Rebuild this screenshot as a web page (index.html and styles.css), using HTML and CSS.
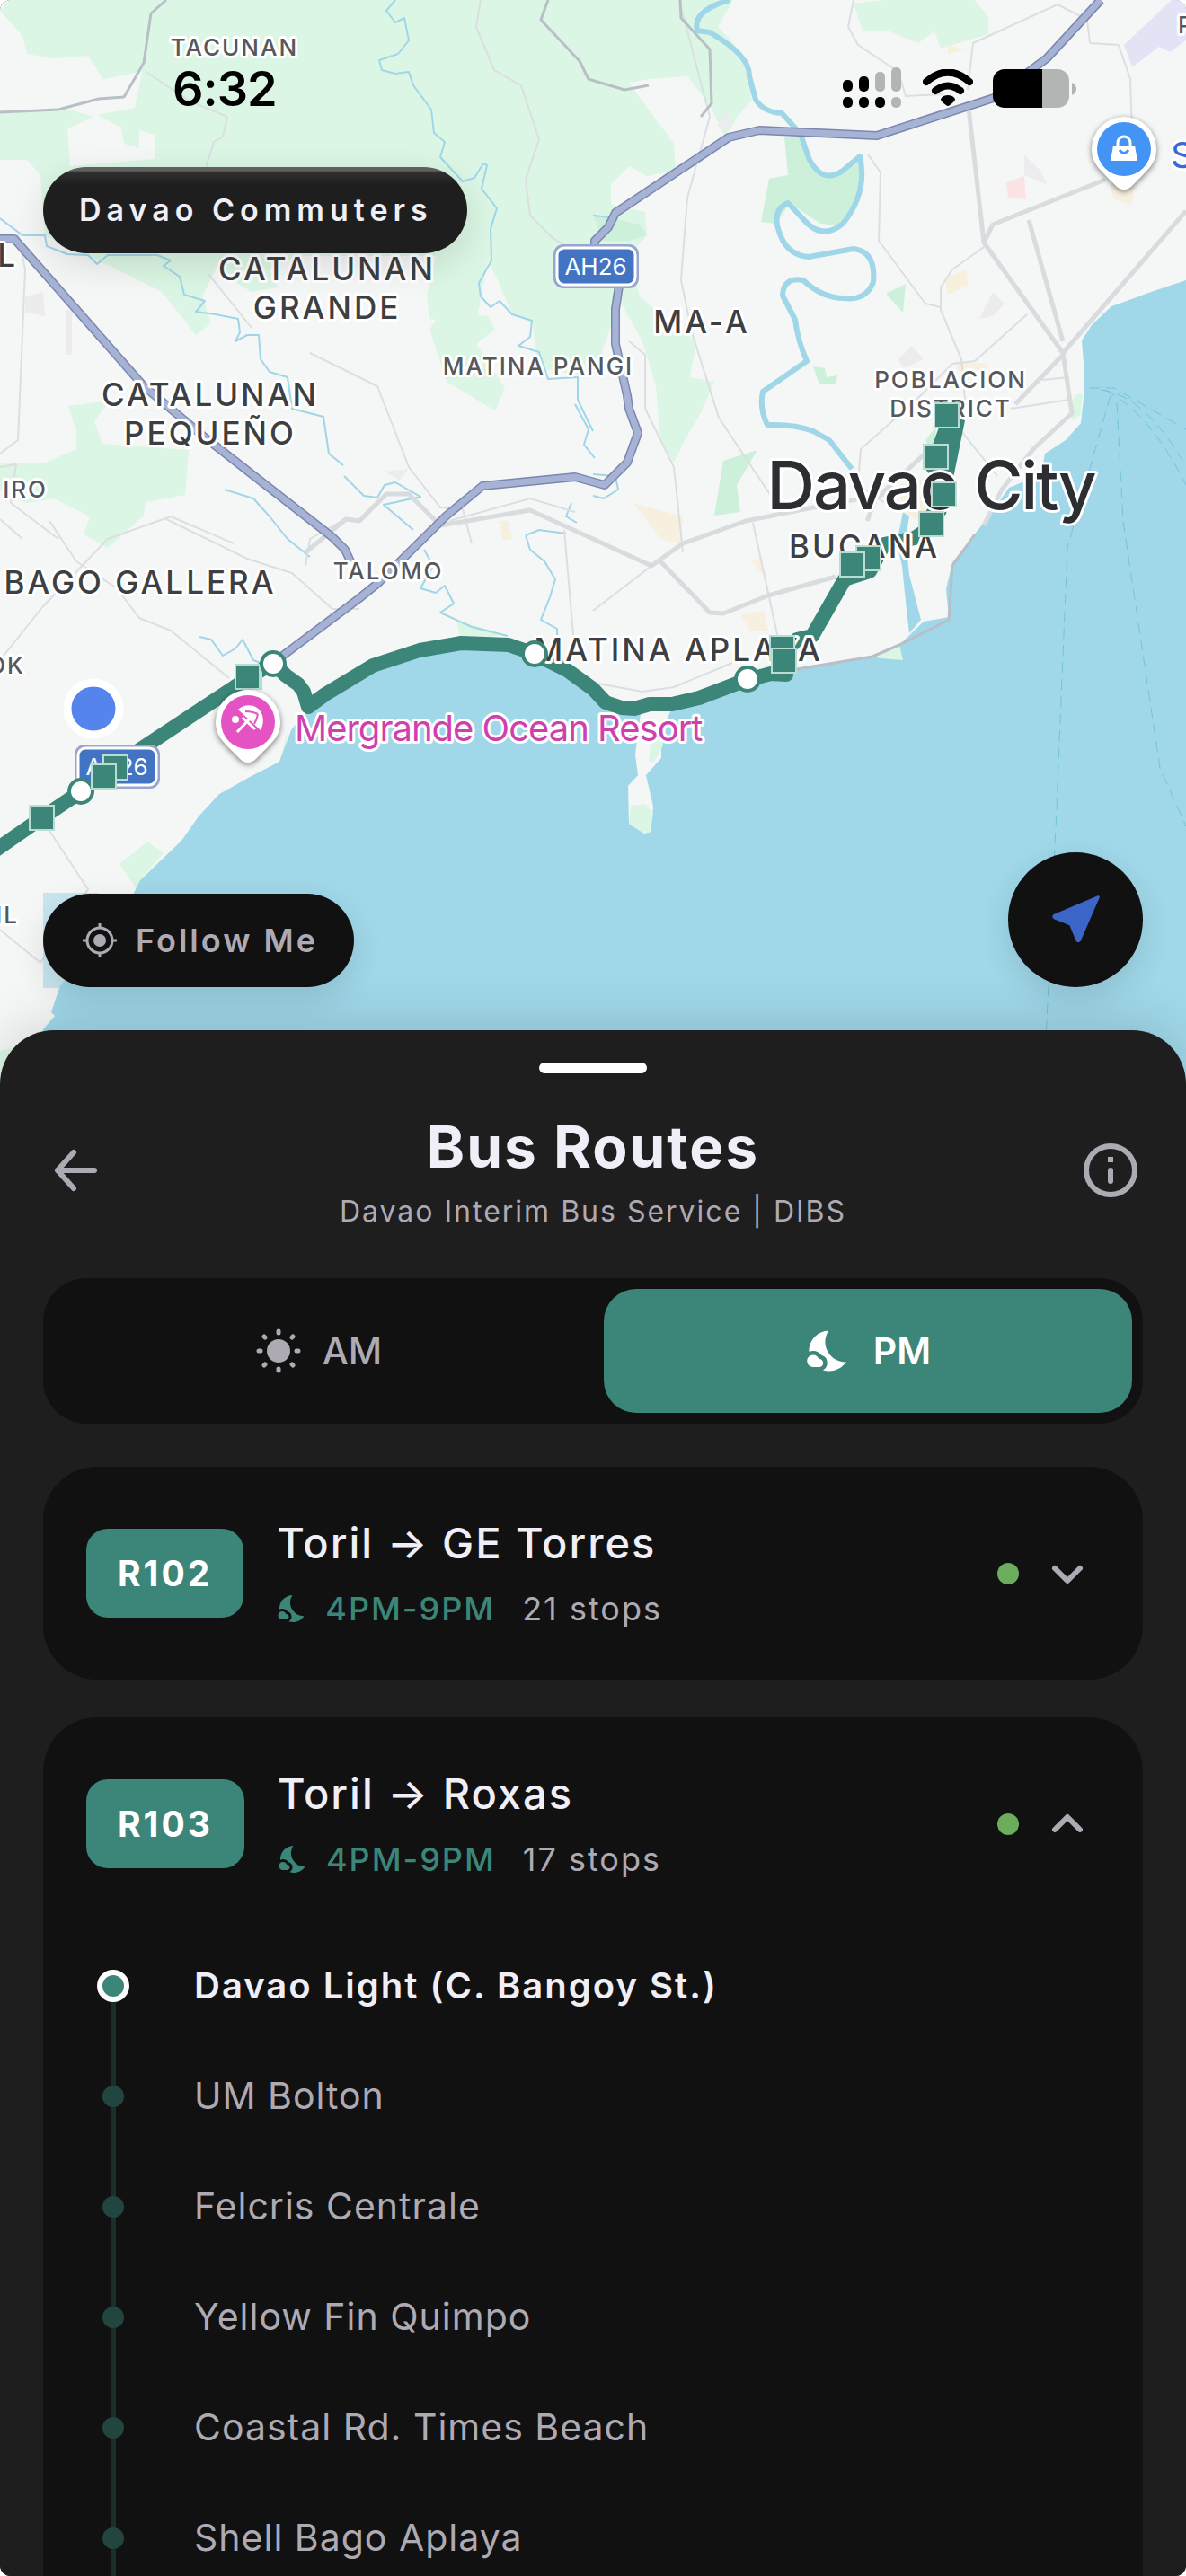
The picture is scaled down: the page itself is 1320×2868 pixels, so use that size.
FILE: index.html
```html
<!DOCTYPE html>
<html lang="en">

<head>
    <meta charset="utf-8">
    <meta name="viewport" content="width=device-width, initial-scale=1">
    <title>Davao Commuters</title>
    <link rel="stylesheet" href="styles.css">
</head>

<body>
    <div class="app">
        <div class="map">
            <svg class="map-canvas" viewBox="0 0 1320 1207" preserveAspectRatio="xMidYMin slice">
                <!-- parks and forest -->
                <g class="green">
                    <path d="M10 0H816L799 30L828 61L837 111L822 128L807 153L792 120L765 85L723 88L700 92L750 160L752 190L720 196L700 185L680 205L680 228L718 236L720 262L700 285L712 330L735 350L775 380L768 420L795 425L780 460L762 490L750 515L735 490L730 430L715 380L690 335L660 420L600 410L592 357L570 350L553 310L543 290L530 360L478 355L475 330L485 285H330L300 300L310 320L280 325L240 300L225 330L235 360L218 373L200 350L180 325L130 300L50 262L45 195L30 178H0V125L70 120L105 130L75 143L78 185L172 177V150L155 145V165L138 160L135 142L108 128L150 120L158 80L115 88L98 62L60 65L30 60L25 40L0 12Z" />
                    <path d="M490 348L543 352L551 367L530 383L562 432L551 457L497 425L478 367Z" />
                    <path d="M76 452L122 446L105 469L114 494L210 501L206 551L162 559L160 574L120 610L93 595L100 575L60 555L30 560L0 545V515L50 515L85 500L85 480Z" />
                    <path d="M950 4L985 0H1085L1100 19V38L1081 44L1047 54L1040 35L1022 48L988 34L960 34Z" />
                    <path d="M133 962L164 937L182 950L160 975L152 990Z M320 813L311 848L318 838ZM508 690L560 706L540 712L512 708Z" />
                    <path d="M0 1170L20 1165L10 1207H0Z" />
                </g>
                <g class="green-deep">
                    <path d="M873 153L891 153L900 176L913 195L934 195L957 178L959 199L950 230L934 251L913 249L879 226L864 249L847 247L856 199L877 195Z" />
                    <path d="M1008 316L1005 348L986 327ZM905 408L918 410L920 420L932 418L930 428L912 428ZM805 513L843 501L820 540L824 570L795 574ZM660 238L712 250L720 262L700 268L670 268ZM1030 490L1042 475L1040 510Z" />
                </g>
                <!-- built-up blocks -->
                <path class="sand" d="M1052 310L1075 300L1078 318L1055 328ZM1062 402L1100 405L1090 425L1072 422ZM1000 540L1040 530L1060 560L1030 585L1005 570ZM825 685L850 680L855 703L835 703ZM836 625L848 620L850 640ZM705 560L760 575L758 605L735 600ZM1235 205L1262 205L1260 228L1240 222ZM555 580L565 580L570 600L560 602ZM1055 50L1075 55L1055 60Z" />
                <path class="grey" d="M1140 172L1158 190L1165 205L1140 195ZM1090 355L1105 325L1118 338L1105 352ZM1000 400L1015 385L1028 400L1005 410ZM28 330L48 325L50 352L28 348ZM73 345H80V395H73ZM428 525L455 522L445 535ZM798 140L812 120L812 145Z" />
                <path class="rose" d="M1120 203L1140 196L1142 222L1122 220Z" />
                <path class="airport" d="M1251 50L1304 0H1320V45L1302 58L1290 52L1260 75Z" />

                <!-- gulf -->
                <path class="sea" d="M1320 312L1287 323L1237 341L1215 362L1204 379L1207 417V436L1203 471L1186 490L1163 505L1159 528L1123 543L1098 578L1060 626L1053 656L1056 687L1028 692L1001 718L971 731L887 745L850 758L778 783L748 788L736 815L736 844L719 863L727 898L724 926L717 928L700 917L699 875L710 863L707 840L713 794L692 788L660 767L631 746L595 728L566 718L513 716L467 724L415 741L343 787L324 813L311 848L278 865L244 884L221 909L202 936L156 980L149 994L100 1045L66 1100L57 1127L61 1131L48 1146L36 1207H1320Z" />
                <path class="green" d="M702 897L718 895L727 905L724 926L717 928L700 917ZM736 815L724 830L722 848L728 848L738 830ZM1192 468L1195 440L1205 438L1203 462ZM971 731L1001 718L1005 735L980 733Z" />

                <!-- rivers -->
                <g class="creek">
                    <path d="M440 0L430 12L440 25L450 20L455 45L443 60L422 67L425 78L440 82L455 80L460 95L480 122L483 148L495 158L490 175L515 202L528 198L538 182L542 184L536 210L553 232L546 255L547 290L533 315L535 330L546 342L556 335L570 350L592 357L590 375L577 385L600 392L610 422L643 420V445L655 470L660 480" />
                    <path d="M0 243L25 262L50 262L52 274L75 283L98 284L108 294L120 284H175L190 290L182 296L200 308L205 328L228 335L218 347L240 350L265 355L267 370L262 380L275 373L288 373L290 400L300 414L320 420L325 455L360 464L366 505L382 518M383 530L405 552L420 554L428 540L440 537L468 553L427 562L460 590" />
                    <path d="M472 612L482 630L468 655L485 660L495 652L505 672L490 682L525 698L565 708" />
                    <path d="M585 596L590 612L606 625L618 645L612 665L602 690L620 700V710M636 560L630 575L642 582M585 596L600 590L630 594" />
                    <path d="M222 709L235 712L248 730L262 722L270 712L282 735L300 742M250 545L282 555L300 575L320 600L345 620" />
                    <path d="M660 528L685 530L688 545L672 555L660 552M660 240L680 242M640 450L655 478L650 495L662 510" />
                </g>
                <path class="river" d="M812 0Q770 12 776 34L790 36Q835 62 834 85L841 111Q850 125 870 126L891 149L900 176Q915 206 938 190L957 174Q966 215 938 249Q915 268 895 245L877 226Q862 232 865 250Q872 284 900 286L950 277Q975 280 972 314Q964 335 940 332Q915 332 894 312Q872 308 871 329L885 356Q888 380 898 402L849 436Q845 455 854 473Q885 472 905 480L923 490L948 522" />
                <path class="sea" d="M1005 570L1012 575L1008 600L1012 640L1025 690L1012 705L1009 680L1004 630L998 605Z" />

                <!-- minor streets -->
                <g class="street">
                    <path d="M163 80L210 112L253 130L248 152L238 158L225 200M0 578L25 600M0 520L18 517L12 560L65 600M232 305L280 365M345 393L420 430L455 520L490 565L515 567L525 605M20 260L28 300L20 490L0 505" />
                    <path d="M0 735L48 675L120 600L190 575L260 605M55 580L85 625L130 655L155 688L190 702L255 755M185 578L275 622L325 638L370 678H400M340 630L345 600L380 580M55 925L98 990L45 1072L0 1035" />
                    <path d="M535 0L530 30L550 78L580 95L600 155L585 200L590 240L615 265L655 290M756 0L790 130L765 220L758 312L770 370L800 465L870 570M700 380L718 395V455L750 520L760 615" />
                    <path d="M950 0L944 30L955 50L1000 80L1008 107L1050 105M966 172L980 192L978 268L1030 338L1047 342M1177 5L1083 48L1077 100M1177 5L1210 22L1213 48L1245 50L1258 88L1260 150" />
                    <path d="M1095 275L1060 300L1047 320V345L1070 400L1075 455M1143 350L1085 402L1060 405L1020 445L958 500L955 540L985 560M1160 423L1190 420M1125 455L1190 445M1070 480L1110 530" />
                    <path d="M838 582L868 720M660 680L725 630M660 760L715 770L750 765L815 738M640 570L590 555L500 580M628 590L640 730" />
                </g>
                <g class="road">
                    <path d="M1078 120L1095 270L1183 393L1320 235M1183 393L1190 440L1193 460L1150 500L1115 545L1095 585M1095 270L1105 250L1230 200M1145 245L1183 380M1130 450L1183 395M1035 500L975 555L965 580" />
                    <path d="M340 615L385 578L400 580L430 550L455 550L490 585L590 568L660 600L725 630L760 605L830 580L905 565L985 550M735 625L790 682L805 683L855 663L930 642" />
                </g>
                <g class="road-dark">
                    <path d="M185 0L168 15L160 70L138 108L110 110L65 122L0 125" />
                    <path d="M610 0L602 22L645 68L655 88L695 100L722 95M757 0L758 20L790 55L792 115L780 130" />
                    <path d="M887 745L971 731L1001 718L1056 690L1060 630L1085 595" />
                </g>
                <g class="ferry">
                    <path d="M1212 432H1240L1320 478M1230 434Q1280 460 1320 540M1236 440L1188 610L1176 900L1164 1160M1243 448L1250 580L1291 855L1320 920M1225 434Q1275 440 1320 520" />
                </g>

                <!-- AH26 -->
                <path class="highway-edge" d="M0 266H16L160 430L228 487L370 598L384 612L390 625M304 738L400 666L421 649L497 574L537 541L640 531L673 540L698 515L710 482L700 455L698 440L685 383V344L689 318M662 272V268L677 253L685 237L811 153L845 145L976 151L1106 109L1165 65L1225 0" />
                <path class="highway" d="M0 266H16L160 430L228 487L370 598L384 612L390 625M304 738L400 666L421 649L497 574L537 541L640 531L673 540L698 515L710 482L700 455L698 440L685 383V344L689 318M662 272V268L677 253L685 237L811 153L845 145L976 151L1106 109L1165 65L1225 0" />

                <path class="ghost" d="M48 994H110V1100H48Z" />

                <!-- bus line -->
                <path class="line" d="M-10 950L46 911L89 882L128 853L276 755L304 738L318 752L332 762L338 770L343 787L362 773L415 741L467 724L513 716L566 718L595 728L631 746L660 767L674 782L692 788L706 789L723 784H748L778 777L828 758L858 750L875 751L874 725L887 712L904 708L940 645L968 636L984 606L1018 599L1036 587" />
                <path class="line-fill" d="M1050 462L1074 468L1053 572L1036 590L1030 570L1046 545L1030 522L1038 495Z" />

                <g class="shield">
                    <rect class="shield-edge" x="616" y="272" width="95" height="49" rx="11" />
                    <rect x="620" y="276" width="87" height="41" rx="8" />
                    <text x="663" y="306">AH26</text>
                    <rect class="shield-edge" x="83" y="829" width="95" height="49" rx="11" />
                    <rect x="87" y="833" width="87" height="41" rx="8" />
                    <text x="130" y="863">AH26</text>
                </g>

                <!-- place names -->
                <g class="place small">
                    <text x="261" y="62">TACUNAN</text>
                    <text x="599" y="417">MATINA PANGI</text>
                    <text x="432" y="645">TALOMO</text>
                    <text x="1058" y="432">POBLACION</text>
                    <text x="1058" y="464">DISTRICT</text>
                    <text class="to-end" x="53" y="554">IRO</text>
                    <text class="to-end" x="28" y="750">OK</text>
                    <text class="to-end" x="21" y="1028">IL</text>
                    <text class="to-start" x="1311" y="37">P</text>
                </g>
                <g class="place">
                    <text x="364" y="312">CATALUNAN</text>
                    <text x="364" y="355">GRANDE</text>
                    <text x="234" y="452">CATALUNAN</text>
                    <text x="234" y="495">PEQUEÑO</text>
                    <text x="156" y="661">BAGO GALLERA</text>
                    <text x="781" y="371">MA-A</text>
                    <text x="962" y="621">BUCANA</text>
                    <text x="755" y="736">MATINA APLAYA</text>
                    <text class="to-end" x="20" y="297">L</text>
                </g>
                <text class="city" x="1036" y="567">Davao City</text>
                <text class="poi resort" x="328" y="825">Mergrande Ocean Resort</text>
                <text class="poi shop" x="1303" y="187">SM</text>

                <!-- stops -->
                <g class="stop-square">
                    <rect x="1040" y="449" width="27" height="27" />
                    <rect x="1028" y="495" width="27" height="27" />
                    <rect x="1037" y="537" width="27" height="27" />
                    <rect x="1023" y="570" width="27" height="27" />
                    <rect x="953" y="608" width="27" height="27" />
                    <rect x="935" y="615" width="27" height="27" />
                    <rect x="857" y="708" width="27" height="27" />
                    <rect x="859" y="722" width="27" height="27" />
                    <rect x="264" y="740" width="27" height="27" />
                    <rect x="262" y="740" width="27" height="27" />
                    <rect x="115" y="841" width="27" height="27" />
                    <rect x="33" y="897" width="27" height="27" />
                </g>
                <g class="stop-round">
                    <circle cx="304" cy="739" r="13" />
                    <circle cx="595" cy="728" r="13" />
                    <circle cx="832" cy="756" r="13" />
                    <circle cx="90" cy="881" r="13" />
                </g>
                <rect class="stop-square" x="102" y="851" width="27" height="27" />

                <!-- pins -->
                <g class="pin">
                    <path d="M1251 130a36 36 0 0 1 36 36c0 17-11 24-23 37-6 6-8 8-13 8s-7-2-13-8c-12-13-23-20-23-37a36 36 0 0 1 36-36z" />
                    <circle class="shop-dot" cx="1251" cy="166" r="30" />
                    <path class="glyph" d="M1239 162h24l3 17h-30z" />
                    <path class="glyph-line" d="M1244 164v-5a7 7 0 0 1 14 0v5" />
                    <path class="shop-smile" d="M1246 167q5 7 10 0" />
                </g>
                <g class="pin">
                    <path d="M276 768a36 36 0 0 1 36 36c0 17-11 24-23 37-6 6-8 8-13 8s-7-2-13-8c-12-13-23-20-23-37a36 36 0 0 1 36-36z" />
                    <circle class="resort-dot" cx="276" cy="804" r="30" />
                    <circle class="glyph" cx="262" cy="801" r="4" />
                    <path class="glyph-line" d="M264 815L282 796M270 799L284 812" />
                    <path class="glyph" d="M265 790c9-8 22-5 26 4 3 7 2 13-1 19z" />
                    <path class="resort-rib" d="M273 792q8 0 14 3M283 806q3-5 4-11" />
                </g>
                <circle class="me-ring" cx="104" cy="789" r="29" />
            </svg>

            <div class="status">
                <span class="clock">6:32</span>
                <span class="status-icons">
                    <svg width="67" height="46" viewBox="0 0 67 46">
                        <rect x="0" y="14" width="11" height="13" rx="5" />
                        <rect x="18" y="10" width="11" height="17" rx="5" />
                        <rect class="dim" x="36" y="5" width="11" height="22" rx="5" />
                        <rect class="dim" x="54" y="0" width="11" height="27" rx="5" />
                        <rect x="0" y="33" width="11" height="12" rx="5" />
                        <rect x="18" y="33" width="11" height="12" rx="5" />
                        <rect x="36" y="33" width="11" height="12" rx="5" />
                        <rect class="dim" x="54" y="33" width="11" height="12" rx="5" />
                    </svg>
                    <svg width="56" height="42" viewBox="0 0 56 42">
                        <path class="wave" d="M4 14Q28-7 52 14M14 24Q28 13 42 24" />
                        <path d="M28 29c5 0 8 3 8 5 0 1-6 7-8 7s-8-6-8-7c0-2 3-5 8-5z" />
                    </svg>
                    <svg width="94" height="43" viewBox="0 0 94 43">
                        <path class="dim" d="M55 0H72a13 13 0 0 1 13 13V30a13 13 0 0 1-13 13H55z" />
                        <path d="M55 0H13A13 13 0 0 0 0 13V30A13 13 0 0 0 13 43H55z" />
                        <path class="dim" d="M88 15q5 2 5 7t-5 7z" />
                    </svg>
                </span>
            </div>

            <h1 class="brand">Davao Commuters</h1>

            <div class="map-actions">
                <button class="follow" type="button">
                    <svg width="40" height="40" viewBox="0 0 40 40">
                        <circle class="ring" cx="20" cy="20" r="14" />
                        <circle cx="20" cy="20" r="7" />
                        <path class="ring" d="M20 1v5M20 34v5M1 20h5M34 20h5" />
                    </svg>
                    Follow Me
                </button>
                <button class="locate" type="button" aria-label="My location">
                    <svg width="72" height="72" viewBox="0 0 24 24">
                        <path d="M20.3 3.1L4.1 9.9c-.9.4-.9 1.6.1 1.9l5.6 2.3 2.3 5.6c.3.9 1.5 1 1.9 0L20.9 3.8c.2-.5-.2-.9-.6-.7z" />
                    </svg>
                </button>
            </div>
        </div>

        <main class="sheet">
            <div class="handle"></div>
            <header class="sheet-head">
                <button class="icon-button" type="button" aria-label="Back">
                    <svg width="72" height="72" viewBox="0 0 72 72">
                        <path d="M57 36H16M34 16L16 36L34 56" />
                    </svg>
                </button>
                <div>
                    <h2>Bus Routes</h2>
                    <p>Davao Interim Bus Service | DIBS</p>
                </div>
                <button class="icon-button" type="button" aria-label="About">
                    <svg width="72" height="72" viewBox="0 0 72 72">
                        <circle cx="36" cy="36" r="27" />
                        <path d="M36 36v12" />
                        <path class="square" d="M36 21v6" />
                    </svg>
                </button>
            </header>

            <div class="periods">
                <button type="button" aria-pressed="false">
                    <svg width="54" height="54" viewBox="0 0 54 54">
                        <circle cx="27" cy="27" r="13" />
                        <path class="rays" d="M27 5v2M27 47v2M5 27h2M47 27h2M11 11l1 1M42 42l1 1M43 11l-1 1M12 42l-1 1" />
                    </svg>
                    AM
                </button>
                <button class="active" type="button" aria-pressed="true">
                    <svg width="54" height="54" viewBox="0 0 24 24">
                        <path d="M11.1 12.08c-2.33-4.51-.5-8.48.53-10.07C6.27 2.2 1.98 6.59 1.98 12c0 .14.02.28.02.42.62-.27 1.29-.42 2-.42 1.66 0 3.18.83 4.1 2.15A4.01 4.01 0 0 1 11 18c0 1.52-.87 2.83-2.12 3.51.98.32 2.03.5 3.11.5 3.5 0 6.58-1.8 8.37-4.52-2.36.23-6.98-.97-9.26-5.41z" />
                        <path d="M7 16h-.18C6.4 14.84 5.3 14 4 14c-1.66 0-3 1.34-3 3s1.34 3 3 3h3c1.1 0 2-.9 2-2s-.9-2-2-2z" />
                    </svg>
                    PM
                </button>
            </div>

            <section class="route">
                <button class="route-head" type="button" aria-expanded="false">
                    <span class="badge">R102</span>
                    <span class="route-text">
                        <span class="route-name">Toril → GE Torres</span>
                        <span class="route-meta">
                            <svg width="36" height="36" viewBox="0 0 24 24">
                                <path d="M11.1 12.08c-2.33-4.51-.5-8.48.53-10.07C6.27 2.2 1.98 6.59 1.98 12c0 .14.02.28.02.42.62-.27 1.29-.42 2-.42 1.66 0 3.18.83 4.1 2.15A4.01 4.01 0 0 1 11 18c0 1.52-.87 2.83-2.12 3.51.98.32 2.03.5 3.11.5 3.5 0 6.58-1.8 8.37-4.52-2.36.23-6.98-.97-9.26-5.41z" />
                                <path d="M7 16h-.18C6.4 14.84 5.3 14 4 14c-1.66 0-3 1.34-3 3s1.34 3 3 3h3c1.1 0 2-.9 2-2s-.9-2-2-2z" />
                            </svg>
                            <span class="hours">4PM-9PM</span>
                            <span>21 stops</span>
                        </span>
                    </span>
                    <span class="running"></span>
                    <svg class="chevron" width="72" height="72" viewBox="0 0 72 72">
                        <path d="M22 30L36 44L50 30" />
                    </svg>
                </button>
            </section>

            <section class="route">
                <button class="route-head" type="button" aria-expanded="true">
                    <span class="badge">R103</span>
                    <span class="route-text">
                        <span class="route-name">Toril → Roxas</span>
                        <span class="route-meta">
                            <svg width="36" height="36" viewBox="0 0 24 24">
                                <path d="M11.1 12.08c-2.33-4.51-.5-8.48.53-10.07C6.27 2.2 1.98 6.59 1.98 12c0 .14.02.28.02.42.62-.27 1.29-.42 2-.42 1.66 0 3.18.83 4.1 2.15A4.01 4.01 0 0 1 11 18c0 1.52-.87 2.83-2.12 3.51.98.32 2.03.5 3.11.5 3.5 0 6.58-1.8 8.37-4.52-2.36.23-6.98-.97-9.26-5.41z" />
                                <path d="M7 16h-.18C6.4 14.84 5.3 14 4 14c-1.66 0-3 1.34-3 3s1.34 3 3 3h3c1.1 0 2-.9 2-2s-.9-2-2-2z" />
                            </svg>
                            <span class="hours">4PM-9PM</span>
                            <span>17 stops</span>
                        </span>
                    </span>
                    <span class="running"></span>
                    <svg class="chevron" width="72" height="72" viewBox="0 0 72 72">
                        <path d="M22 42L36 28L50 42" />
                    </svg>
                </button>
                <ol class="stops">
                    <li class="current">Davao Light (C. Bangoy St.)</li>
                    <li>UM Bolton</li>
                    <li>Felcris Centrale</li>
                    <li>Yellow Fin Quimpo</li>
                    <li>Coastal Rd. Times Beach</li>
                    <li>Shell Bago Aplaya</li>
                </ol>
            </section>
        </main>
    </div>
</body>

</html>
```
FILE: styles.css
```css
*, *::before, *::after {
    box-sizing: border-box;
}
body {
    margin: 0;
    background: #fff;
    font-family: Inter, Roboto, "Liberation Sans", sans-serif;
    color: #f0eef6;
}
h1, h2, p, ol {
    margin: 0;
    padding: 0;
}
button {
    border: 0;
    padding: 0;
    background: none;
    color: inherit;
    font: inherit;
    cursor: pointer;
}
svg {
    display: block;
    flex: none;
    fill: currentColor;
}
.app {
    display: flex;
    flex-direction: column;
    height: 100vh;
    overflow: hidden;
    border-radius: 12px;
    background: #1e1e1e;
}

/* map */
.map {
    position: relative;
    flex: none;
    height: 1207px;
    overflow: hidden;
    background: #f5f6f6;
}
.map-canvas {
    position: absolute;
    inset: 0;
    width: 100%;
    height: 100%;
}
.green { fill: #dbf6e4; }
.green-deep { fill: #cdf0da; }
.sand { fill: #f8f0de; }
.grey { fill: #ececee; }
.rose { fill: #fbe3e3; }
.airport { fill: #e2e4f6; }
.sea { fill: #a0d8e9; }
.creek, .river, .street, .road, .road-dark, .ferry, .highway, .highway-edge, .line {
    fill: none;
    stroke-linejoin: round;
}
.creek { stroke: #9fd6e8; stroke-width: 2; }
.river { stroke: #9fd6e8; stroke-width: 6; }
.street { stroke: #dcdee1; stroke-width: 2; }
.road { stroke: #d8dcdf; stroke-width: 5; }
.road-dark { stroke: #b9bfc6; stroke-width: 3; }
.ferry { stroke: #73c3dc; stroke-width: 1; stroke-dasharray: 12 7; }
.highway-edge { stroke: #7b87b0; stroke-width: 10; }
.highway { stroke: #a7b3d4; stroke-width: 7; }
.line { stroke: #3b8678; stroke-width: 16; }
.line-fill { fill: #3b8678; }
.ghost { fill: #a0d8e9; opacity: .55; }
.shield rect {
    fill: #4374c4;
    stroke: #fff;
    stroke-width: 3;
}
.shield .shield-edge {
    fill: #9aa5cf;
    stroke: none;
}
.shield text {
    fill: #fff;
    font-size: 26px;
    text-anchor: middle;
}
.place, .city, .poi {
    paint-order: stroke;
    stroke: #fff;
    stroke-width: 6px;
    stroke-linejoin: round;
}
.place {
    fill: #3d3f42;
    font-size: 35px;
    font-weight: 500;
    letter-spacing: 3px;
    text-anchor: middle;
}
.place.small {
    fill: #55585c;
    font-size: 26px;
    letter-spacing: 2px;
}
.to-end { text-anchor: end; }
.to-start { text-anchor: start; }
.city {
    fill: #2d2e31;
    font-size: 74px;
    font-weight: 500;
    letter-spacing: -2px;
    text-anchor: middle;
}
.poi {
    font-size: 40px;
    letter-spacing: -1px;
}
.resort { fill: #cf3fae; }
.shop { fill: #3b67d6; }
.stop-square {
    fill: #3b8678;
    stroke: #b9ddd3;
    stroke-width: 2;
}
.stop-round {
    fill: #fff;
    stroke: #3b8678;
    stroke-width: 4;
}
.pin {
    fill: #fff;
    filter: drop-shadow(0 2px 3px rgba(0, 0, 0, .5));
}
.shop-dot { fill: #4494f5; }
.resort-dot { fill: #e552c4; }
.glyph-line { fill: none; stroke: #fff; stroke-width: 3; }
.shop-smile { fill: none; stroke: #4494f5; stroke-width: 3; }
.resort-rib { fill: none; stroke: #e552c4; stroke-width: 2; }
.me-ring {
    fill: #5584ec;
    stroke: #fff;
    stroke-width: 9;
}
.status {
    position: relative;
    display: flex;
    justify-content: space-between;
    align-items: center;
    height: 100px;
    margin-top: 48px;
    padding: 0 121px 0 192px;
    color: #000;
}
.clock {
    font-size: 54px;
    font-weight: 600;
    letter-spacing: -1px;
}
.status-icons {
    display: flex;
    align-items: center;
    gap: 22px;
}
.dim { fill: #b3b5b4; }
.wave {
    fill: none;
    stroke: #000;
    stroke-width: 8;
    stroke-linecap: round;
}
.brand {
    position: absolute;
    top: 186px;
    left: 48px;
    padding: 0 38px 0 40px;
    border-radius: 48px;
    background: linear-gradient(#606060 0 4px, #303030 6px, #1e1e1e 20px);
    box-shadow: 0 12px 40px rgba(0, 0, 0, .12);
    font-size: 34px;
    font-weight: 600;
    line-height: 96px;
    letter-spacing: 6px;
}
.map-actions {
    position: absolute;
    left: 48px;
    right: 48px;
    bottom: 108px;
    display: flex;
    justify-content: space-between;
    align-items: flex-end;
}
.follow, .locate {
    background: #111;
    box-shadow: 0 12px 36px rgba(0, 0, 0, .12);
}
.follow {
    display: flex;
    align-items: center;
    gap: 20px;
    height: 104px;
    padding: 0 40px 0 43px;
    border-radius: 52px;
    color: #aeaab4;
    font-size: 36px;
    font-weight: 600;
    letter-spacing: 3px;
}
.ring {
    fill: none;
    stroke: currentColor;
    stroke-width: 3;
}
.locate {
    display: flex;
    align-items: center;
    justify-content: center;
    width: 150px;
    height: 150px;
    border-radius: 50%;
    color: #3b66c8;
}

/* bottom sheet */
.sheet {
    position: relative;
    flex: 1;
    margin-top: -60px;
    padding: 36px 48px 0;
    border-radius: 60px 60px 0 0;
    background: #1e1e1e;
    box-shadow: 0 -6px 60px rgba(0, 0, 0, .14);
}
.handle {
    width: 120px;
    height: 12px;
    margin: 0 auto 42px;
    border-radius: 6px;
    background: #fff;
}
.sheet-head {
    display: flex;
    justify-content: space-between;
    align-items: center;
    margin-bottom: 54px;
    text-align: center;
}
.sheet-head h2 {
    margin-bottom: 12px;
    font-size: 64px;
    font-weight: 700;
    line-height: 80px;
    letter-spacing: 2px;
}
.sheet-head p {
    color: #aeaab4;
    font-size: 32px;
    line-height: 40px;
    letter-spacing: 2px;
}
.icon-button {
    color: #aeaab4;
}
.icon-button path, .icon-button circle, .chevron path {
    fill: none;
    stroke: currentColor;
    stroke-width: 6;
    stroke-linecap: round;
    stroke-linejoin: round;
}
.icon-button .square {
    stroke-linecap: butt;
}
.periods {
    display: grid;
    grid-template-columns: 1fr 1fr;
    gap: 24px;
    margin-bottom: 48px;
    padding: 12px;
    border-radius: 48px;
    background: #111;
}
.periods button {
    display: flex;
    align-items: center;
    justify-content: center;
    gap: 22px;
    height: 138px;
    border-radius: 36px;
    color: #aeaab4;
    font-size: 41px;
    font-weight: 500;
}
.periods .active {
    background: #3b8678;
    color: #fff;
    font-weight: 600;
}
.rays {
    stroke: currentColor;
    stroke-width: 5;
    stroke-linecap: round;
}
.route {
    margin-bottom: 42px;
    border-radius: 60px;
    background: #111;
}
.route-head {
    display: flex;
    align-items: center;
    width: 100%;
    padding: 55px 48px;
    text-align: left;
}
.badge {
    margin-right: 37px;
    padding: 0 35px;
    border-radius: 24px;
    background: #3b8678;
    color: #fff;
    font-size: 39px;
    font-weight: 700;
    line-height: 99px;
    letter-spacing: 3px;
}
.route-text {
    flex: 1;
}
.route-name {
    display: block;
    margin-bottom: 19px;
    font-size: 47px;
    font-weight: 500;
    line-height: 60px;
    letter-spacing: 2px;
}
.route-meta {
    display: flex;
    align-items: center;
    color: #aeaab4;
    font-size: 36px;
    line-height: 48px;
    letter-spacing: 2px;
}
.route-meta svg {
    margin-right: 18px;
    color: #3b8678;
}
.hours {
    margin-right: 30px;
    color: #3b8678;
    font-weight: 500;
}
.running {
    width: 24px;
    height: 24px;
    margin-right: 18px;
    border-radius: 50%;
    background: #6bad5d;
}
.chevron {
    color: #aeaab4;
}
.stops {
    padding-bottom: 60px;
    list-style: none;
}
.stops li {
    position: relative;
    padding-left: 168px;
    color: #aeaab4;
    font-size: 41px;
    line-height: 123px;
    letter-spacing: 1px;
}
/* track behind the dots */
.stops li::before {
    content: "";
    position: absolute;
    left: 75px;
    top: 0;
    width: 6px;
    height: 100%;
    background: #182f2a;
}
.stops li::after {
    content: "";
    position: absolute;
    left: 66px;
    top: 50px;
    width: 24px;
    height: 24px;
    border-radius: 50%;
    background: #22463f;
}
.stops .current {
    color: #f0eef6;
    font-size: 40px;
    font-weight: 600;
    letter-spacing: 2px;
}
.stops .current::before {
    top: 50%;
    height: 50%;
}
.stops .current::after {
    left: 60px;
    top: 44px;
    width: 36px;
    height: 36px;
    border: 6px solid #fff;
    background: #3b8678;
}
```
